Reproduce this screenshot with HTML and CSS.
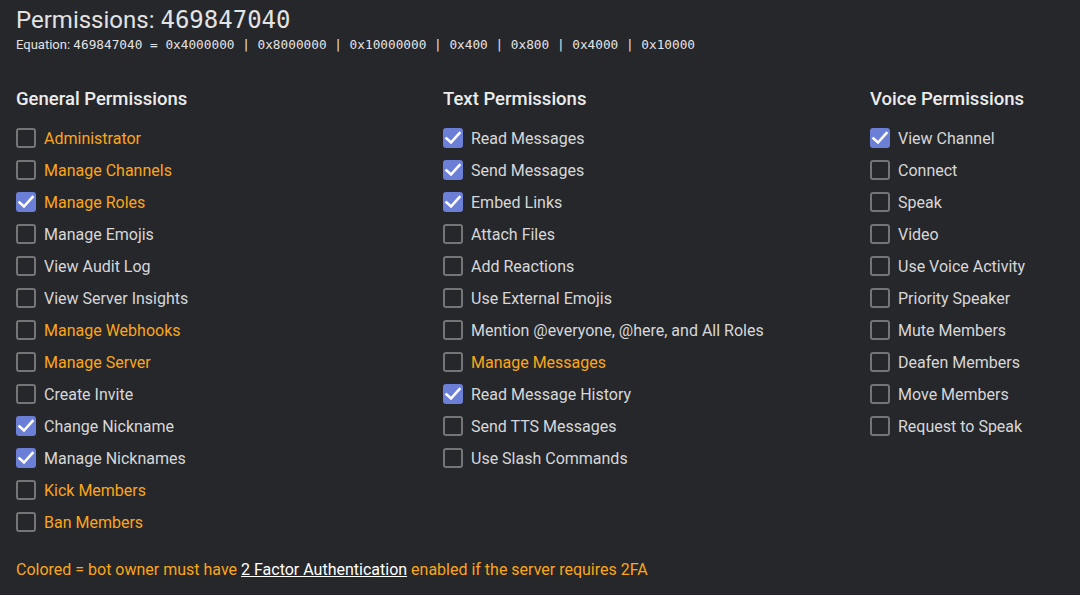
FILE: index.html
```html
<!DOCTYPE html>
<html>
<head>
<meta charset="utf-8">
<link rel="stylesheet" href="styles.css">
</head>
<body>
<div class="page">
  <h1 class="title">Permissions: <span class="mono">469847040</span></h1>
  <div class="equation">Equation: <span class="mono">469847040 = 0x4000000 | 0x8000000 | 0x10000000 | 0x400 | 0x800 | 0x4000 | 0x10000</span></div>

  <div class="columns">
    <div class="col">
      <h2>General Permissions</h2>
      <ul>
        <li class="warn"><span class="box"></span>Administrator</li>
        <li class="warn"><span class="box"></span>Manage Channels</li>
        <li class="warn"><span class="box on"><svg viewBox="0 0 20 20"><path d="M3.5 10.5 L8 14.5 L16.5 5"/></svg></span>Manage Roles</li>
        <li><span class="box"></span>Manage Emojis</li>
        <li><span class="box"></span>View Audit Log</li>
        <li><span class="box"></span>View Server Insights</li>
        <li class="warn"><span class="box"></span>Manage Webhooks</li>
        <li class="warn"><span class="box"></span>Manage Server</li>
        <li><span class="box"></span>Create Invite</li>
        <li><span class="box on"><svg viewBox="0 0 20 20"><path d="M3.5 10.5 L8 14.5 L16.5 5"/></svg></span>Change Nickname</li>
        <li><span class="box on"><svg viewBox="0 0 20 20"><path d="M3.5 10.5 L8 14.5 L16.5 5"/></svg></span>Manage Nicknames</li>
        <li class="warn"><span class="box"></span>Kick Members</li>
        <li class="warn"><span class="box"></span>Ban Members</li>
      </ul>
    </div>
    <div class="col">
      <h2>Text Permissions</h2>
      <ul>
        <li><span class="box on"><svg viewBox="0 0 20 20"><path d="M3.5 10.5 L8 14.5 L16.5 5"/></svg></span>Read Messages</li>
        <li><span class="box on"><svg viewBox="0 0 20 20"><path d="M3.5 10.5 L8 14.5 L16.5 5"/></svg></span>Send Messages</li>
        <li><span class="box on"><svg viewBox="0 0 20 20"><path d="M3.5 10.5 L8 14.5 L16.5 5"/></svg></span>Embed Links</li>
        <li><span class="box"></span>Attach Files</li>
        <li><span class="box"></span>Add Reactions</li>
        <li><span class="box"></span>Use External Emojis</li>
        <li><span class="box"></span>Mention @everyone, @here, and All Roles</li>
        <li class="warn"><span class="box"></span>Manage Messages</li>
        <li><span class="box on"><svg viewBox="0 0 20 20"><path d="M3.5 10.5 L8 14.5 L16.5 5"/></svg></span>Read Message History</li>
        <li><span class="box"></span>Send TTS Messages</li>
        <li><span class="box"></span>Use Slash Commands</li>
      </ul>
    </div>
    <div class="col">
      <h2>Voice Permissions</h2>
      <ul>
        <li><span class="box on"><svg viewBox="0 0 20 20"><path d="M3.5 10.5 L8 14.5 L16.5 5"/></svg></span>View Channel</li>
        <li><span class="box"></span>Connect</li>
        <li><span class="box"></span>Speak</li>
        <li><span class="box"></span>Video</li>
        <li><span class="box"></span>Use Voice Activity</li>
        <li><span class="box"></span>Priority Speaker</li>
        <li><span class="box"></span>Mute Members</li>
        <li><span class="box"></span>Deafen Members</li>
        <li><span class="box"></span>Move Members</li>
        <li><span class="box"></span>Request to Speak</li>
      </ul>
    </div>
  </div>

  <p class="note">Colored = bot owner must have <a href="#">2 Factor Authentication</a> enabled if the server requires 2FA</p>
</div>
</body>
</html>
```

FILE: styles.css
```css
* { box-sizing: border-box; }
html, body { margin: 0; padding: 0; }
body {
  background: #26272b;
  color: #dcddde;
  font-family: Roboto, "Liberation Sans", sans-serif;
  width: 1080px;
  height: 595px;
  overflow: hidden;
}
.page { padding: 5px 16px 0 16px; }
.title {
  margin: 0;
  font-weight: 400;
  font-size: 24px;
  line-height: 30px;
  color: #e3e3e3;
}
.title .mono {
  font-family: "DejaVu Sans Mono", "Liberation Mono", monospace;
  font-size: 24px;
}
.equation {
  font-size: 13px;
  line-height: 16px;
  color: #e3e3e3;
  margin-top: 2px;
  white-space: pre;
}
.equation .mono {
  font-family: "DejaVu Sans Mono", "Liberation Mono", monospace;
  font-size: 12.75px;
}
.columns {
  display: grid;
  grid-template-columns: 427px 427px 1fr;
  margin-top: 34px;
}
.col h2 {
  margin: 0 0 11px 0;
  font-weight: 500;
  font-size: 18.5px;
  line-height: 24px;
  color: #ececec;
}
.col ul { list-style: none; margin: 0; padding: 0; }
.col li {
  display: flex;
  align-items: center;
  height: 32px;
  font-size: 16px;
  color: #d6d7d8;
}
.col li.warn { color: #faa61a; }
.box {
  width: 20px;
  height: 20px;
  border: 2px solid #747577;
  border-radius: 3px;
  margin-right: 8px;
  flex: none;
  display: flex;
}
.box.on {
  background: #6b7fd7;
  border: none;
}
.box svg {
  width: 20px;
  height: 20px;
  display: block;
}
.box svg path {
  fill: none;
  stroke: #ffffff;
  stroke-width: 2.6;
  stroke-linecap: square;
  stroke-linejoin: miter;
}
.note {
  margin: 22px 0 0 0;
  font-size: 16px;
  color: #faa61a;
}
.note a { color: #ffffff; text-decoration: underline; }
```
